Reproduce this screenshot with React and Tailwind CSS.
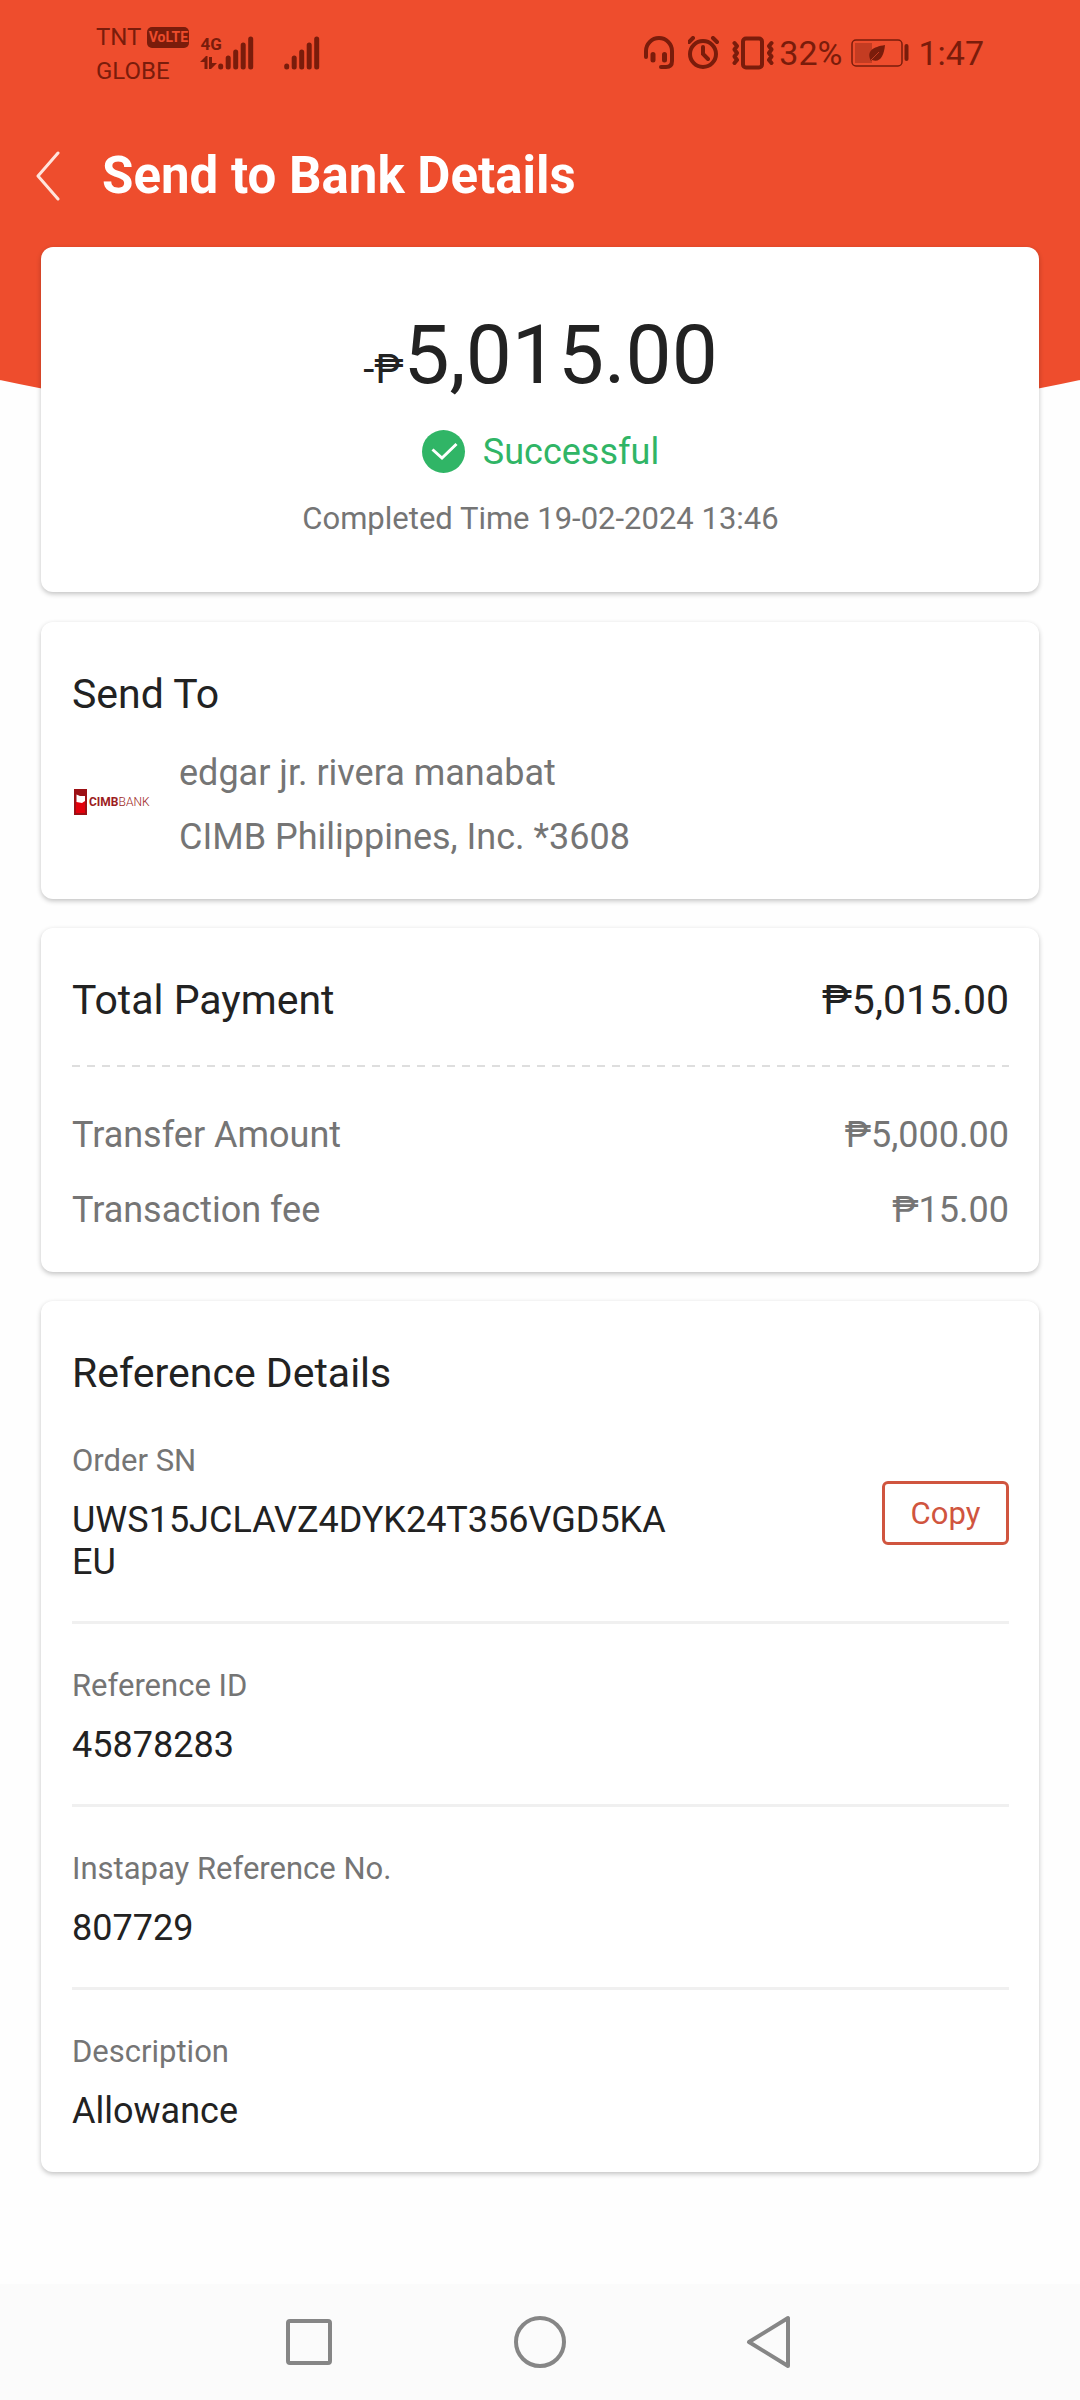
const DARK = '#7a1c0b';

function SignalBars() {
  return (
    <svg width="36" height="34" viewBox="0 0 36 34" fill="none" stroke={DARK} strokeWidth="5" strokeLinecap="round" aria-hidden="true">
      <path d="M2.700 30v1M10.200 22v9M17.700 16v15M25.200 9v22M32.700 3v28" />
    </svg>
  );
}

function StatusBar() {
  return (
    <div className="flex h-[108px] items-start justify-between px-24 pt-5 text-[#7a1c0b]">
      <div className="flex">
        <div className="text-[24px] leading-[34px]">
          <div className="flex items-center gap-[6px]">
            <span>TNT</span>
            <span className="flex h-[21px] w-[42px] items-center justify-center rounded-[5px] bg-[#7a1c0b] text-[14px] leading-none font-bold text-[#ee4d2d]">
              VoLTE
            </span>
          </div>
          <div>GLOBE</div>
        </div>
        <div className="ml-[11px] flex items-start gap-[30px] pt-4">
          <div className="flex">
            <div className="flex h-[34px] w-[18px] flex-col justify-between">
              <span className="text-[17px] leading-4 font-bold">4G</span>
              <svg width="18" height="14" viewBox="0 0 18 14" fill={DARK} aria-hidden="true">
                <path d="M0 6L6 0H7.500V13H4.500V6ZM9 1H12V7H17L11 13H9Z" />
              </svg>
            </div>
            <SignalBars />
          </div>
          <SignalBars />
        </div>
      </div>
      <div className="flex items-center pt-4 text-[34px] leading-[34px]">
        <svg width="32" height="34" viewBox="0 0 32 34" fill="none" stroke={DARK} strokeWidth="4" strokeLinecap="round" aria-hidden="true">
          <path d="M2 21V15A13 13 0 0 1 28 15V25Q28 31 22 31H17" />
          <path d="M9 18.500V24M20.500 18.500V24" strokeWidth="5" />
        </svg>
        <svg className="ml-3" width="32" height="34" viewBox="0 0 32 34" fill="none" stroke={DARK} strokeWidth="4" strokeLinecap="round" aria-hidden="true">
          <circle cx="15" cy="18" r="13" />
          <path d="M15 11V18L20 23M1 6L5 2M29 6L25 2" />
        </svg>
        <svg className="ml-3" width="43" height="34" viewBox="0 0 43 34" fill="none" stroke={DARK} strokeWidth="4" strokeLinejoin="round" strokeLinecap="round" aria-hidden="true">
          <rect x="11" y="2.500" width="19" height="29" rx="3" />
          <path d="M2.500 7L5 10L2.500 13.500L5 17L2.500 20.500L5 24L2.500 27M39.500 7L37 10L39.500 13.500L37 17L39.500 20.500L37 24L39.500 27" strokeWidth="4" />
        </svg>
        <span className="ml-1">32%</span>
        <svg className="ml-[9px]" width="58" height="28" viewBox="0 0 58 28" fill="none" aria-hidden="true">
          <rect x="1" y="1" width="50" height="26" rx="4" stroke={DARK} strokeWidth="1.500" />
          <rect x="4" y="4" width="17" height="20" fill="#c43c22" />
          <path d="M20 22C15 12 22 8 34 6C33 17 29 24 21 21L18 24Z" fill={DARK} />
          <path d="M20 21L28 13" stroke="#c43c22" strokeWidth="1" />
          <path d="M55.500 7V20" stroke={DARK} strokeWidth="4" strokeLinecap="round" />
        </svg>
        <span className="ml-[9px]">1:47</span>
      </div>
    </div>
  );
}

function Card({ className = '', children }) {
  return (
    <section className={`rounded-xl bg-white pr-[30px] pl-[31px] shadow-[0_2px_5px_rgba(0,0,0,0.24)] ${className}`}>
      {children}
    </section>
  );
}

function CardTitle({ children }) {
  return <h2 className="text-[41px] leading-[48px] text-[#222222]">{children}</h2>;
}

function BankLogo() {
  return (
    <div className="flex w-[78px] shrink-0 items-center gap-[2px] pb-[6px] pl-[2px] text-[12px] leading-none whitespace-nowrap text-[#9c1c22]">
      <svg className="shrink-0" width="13" height="26" viewBox="0 0 13 26" aria-hidden="true">
        <rect width="13" height="26" fill="#9c1015" />
        <rect x="2" y="12" width="9" height="12" fill="#e3000b" />
        <path d="M2.500 5.500L6 7H11V12L8 14L2.500 13Z" fill="#ffffff" />
      </svg>
      <span>
        <b>CIMB</b>
        <span className="font-light">BANK</span>
      </span>
    </div>
  );
}

function Field({ label, value, action }) {
  return (
    <div className="flex items-center justify-between">
      <dl className="max-w-[610px] min-w-0">
        <dt className="text-[31px] leading-[36px] text-[#757575]">{label}</dt>
        <dd className="mt-5 text-[36px] leading-[42px] break-all text-[#222222]">{value}</dd>
      </dl>
      {action}
    </div>
  );
}

function Divider() {
  return <hr className="mt-[38px] mb-11 border-t-[3px] border-[#f0f0f0]" />;
}

export default function App() {
  return (
    <div className="flex min-h-screen flex-col bg-[#fefefe] font-['Roboto',sans-serif]">
      <div className="relative">
        <div className="absolute inset-x-0 top-0 h-[423px] overflow-hidden">
          <div className="absolute -inset-x-[10%] inset-y-0 rounded-b-[50%_96px] bg-[#ee4d2d]" />
        </div>
        <header className="relative">
          <StatusBar />
          <div className="flex h-[139px] items-start gap-[41px] pt-[38px] pl-9">
            <button type="button" aria-label="Back" className="mt-[5px]">
              <svg width="25" height="50" viewBox="0 0 25 50" fill="none" stroke="#ffe4dc" strokeWidth="3" strokeLinecap="round" strokeLinejoin="round">
                <path d="M22 2L2 25L22 48" />
              </svg>
            </button>
            <h1 className="text-[51px] leading-[60px] font-bold text-white">Send to Bank Details</h1>
          </div>
        </header>
        <Card className="relative mx-[41px] flex flex-col items-center pt-[60px] pb-[55px]">
          <p className="text-[82px] leading-[96px] text-[#222222]">
            <span className="text-[40px] leading-none">-₱</span>5,015.00
          </p>
          <div className="mt-[27px] flex items-center gap-[17px]">
            <svg width="44" height="44" viewBox="0 0 44 44" aria-hidden="true">
              <circle cx="21.500" cy="21.500" r="21.500" fill="#30b566" />
              <path d="M10.500 19.500L20 28L34.500 14" fill="none" stroke="#ffffff" strokeWidth="3" />
            </svg>
            <span className="text-[36px] leading-[44px] text-[#30b566]">Successful</span>
          </div>
          <p className="mt-[27px] text-[31px] leading-[36px] text-[#757575]">Completed Time 19-02-2024 13:46</p>
        </Card>
      </div>

      <main className="mx-[41px] mt-[30px] flex flex-1 flex-col gap-[29px]">
        <Card className="pt-12 pb-10">
          <CardTitle>Send To</CardTitle>
          <div className="mt-[33px] flex items-center gap-[29px]">
            <BankLogo />
            <div className="flex flex-col gap-5 text-[36px] leading-[44px] text-[#757575]">
              <p>edgar jr. rivera manabat</p>
              <p>CIMB Philippines, Inc. *3608</p>
            </div>
          </div>
        </Card>

        <Card className="pt-12 pb-10">
          <div className="flex justify-between">
            <CardTitle>Total Payment</CardTitle>
            <span className="text-[41px] leading-[48px] text-[#222222]">₱5,015.00</span>
          </div>
          <div className="mt-[41px] mb-[46px] h-[2px] bg-[repeating-linear-gradient(90deg,#dedede_0_8px,transparent_8px_15px)]" />
          <div className="flex flex-col gap-[31px] text-[36px] leading-[44px] text-[#757575]">
            <div className="flex justify-between">
              <span>Transfer Amount</span>
              <span>₱5,000.00</span>
            </div>
            <div className="flex justify-between">
              <span>Transaction fee</span>
              <span>₱15.00</span>
            </div>
          </div>
        </Card>

        <Card className="pt-12 pb-10">
          <CardTitle>Reference Details</CardTitle>
          <div className="mt-[46px]">
            <Field
              label="Order SN"
              value="UWS15JCLAVZ4DYK24T356VGD5KAEU"
              action={
                <button type="button" className="h-16 w-[127px] rounded-md border-[3px] border-[#d0553f] text-[31px] leading-none text-[#d0553f]">
                  Copy
                </button>
              }
            />
            <Divider />
            <Field label="Reference ID" value="45878283" />
            <Divider />
            <Field label="Instapay Reference No." value="807729" />
            <Divider />
            <Field label="Description" value="Allowance" />
          </div>
        </Card>
      </main>

      <nav className="flex h-[116px] items-center justify-center gap-[178px] bg-[#fbfbfb]">
        <button type="button" aria-label="Recent apps">
          <svg width="52" height="54" viewBox="0 0 52 54" fill="none" stroke="#868686" strokeWidth="4">
            <rect x="4" y="6" width="42" height="42" rx="2" />
          </svg>
        </button>
        <button type="button" aria-label="Home">
          <svg width="52" height="54" viewBox="0 0 52 54" fill="none" stroke="#868686" strokeWidth="4">
            <circle cx="26" cy="27" r="24" />
          </svg>
        </button>
        <button type="button" aria-label="Back">
          <svg width="52" height="54" viewBox="0 0 52 54" fill="none" stroke="#868686" strokeWidth="4" strokeLinejoin="round">
            <path d="M44 3V51L5 27Z" />
          </svg>
        </button>
      </nav>
    </div>
  );
}
